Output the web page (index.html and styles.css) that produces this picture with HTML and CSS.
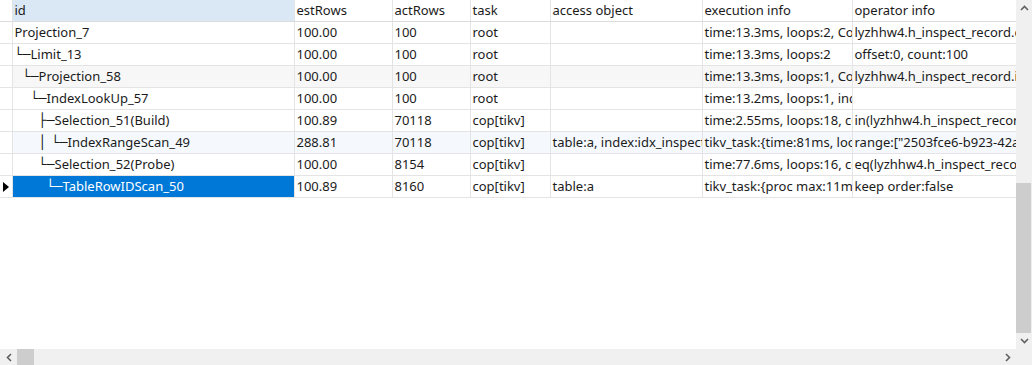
FILE: index.html
```html
<!DOCTYPE html>
<html lang="zh">
<head>
  <meta charset="UTF-8">
  <title>Explain Result</title>
  <link rel="stylesheet" href="styles.css">
</head>
<body>
  <div class="grid-view">
    <div class="grid-main">
      <div class="grid-body">
        <table class="result">
          <colgroup>
            <col class="c-ind"><col class="c-id"><col class="c-est"><col class="c-act">
            <col class="c-task"><col class="c-acc"><col class="c-exec"><col class="c-op">
          </colgroup>
          <thead>
            <tr>
              <th class="ind"></th>
              <th class="active-col">id</th>
              <th>estRows</th>
              <th>actRows</th>
              <th>task</th>
              <th>access object</th>
              <th>execution info</th>
              <th>operator info</th>
            </tr>
          </thead>
          <tbody>
            <tr>
              <td class="ind"></td>
              <td class="tree">Projection_7</td>
              <td>100.00</td><td>100</td><td>root</td><td></td>
              <td>time:13.3ms, loops:2, Concurrency:OFF</td>
              <td>lyzhhw4.h_inspect_record.create_time</td>
            </tr>
            <tr>
              <td class="ind"></td>
              <td class="tree"><span class="br">└─</span>Limit_13</td>
              <td>100.00</td><td>100</td><td>root</td><td></td>
              <td>time:13.3ms, loops:2</td>
              <td>offset:0, count:100</td>
            </tr>
            <tr class="row-gray">
              <td class="ind"></td>
              <td class="tree"><span class="ind-1"></span><span class="br">└─</span>Projection_58</td>
              <td>100.00</td><td>100</td><td>root</td><td></td>
              <td>time:13.3ms, loops:1, Concurrency:OFF</td>
              <td>lyzhhw4.h_inspect_record.inspect_id</td>
            </tr>
            <tr>
              <td class="ind"></td>
              <td class="tree"><span class="ind-2"></span><span class="br">└─</span>IndexLookUp_57</td>
              <td>100.00</td><td>100</td><td>root</td><td></td>
              <td>time:13.2ms, loops:1, index_task</td>
              <td></td>
            </tr>
            <tr>
              <td class="ind"></td>
              <td class="tree"><span class="ind-3"></span><span class="br">├─</span>Selection_51(Build)</td>
              <td>100.89</td><td>70118</td><td>cop[tikv]</td><td></td>
              <td>time:2.55ms, loops:18, cop_task</td>
              <td>in(lyzhhw4.h_inspect_record.status</td>
            </tr>
            <tr class="row-hover">
              <td class="ind"></td>
              <td class="tree"><span class="ind-3"></span><span class="br">│</span><span class="ind-half"></span><span class="br">└─</span>IndexRangeScan_49</td>
              <td>288.81</td><td>70118</td><td>cop[tikv]</td>
              <td>table:a, index:idx_inspectrecord</td>
              <td>tikv_task:{time:81ms, loops:76}</td>
              <td>range:["2503fce6-b923-42a1</td>
            </tr>
            <tr>
              <td class="ind"></td>
              <td class="tree"><span class="ind-3"></span><span class="br">└─</span>Selection_52(Probe)</td>
              <td>100.00</td><td>8154</td><td>cop[tikv]</td><td></td>
              <td>time:77.6ms, loops:16, cop_task</td>
              <td>eq(lyzhhw4.h_inspect_record.flag</td>
            </tr>
            <tr class="row-current">
              <td class="ind"><span class="pointer"></span></td>
              <td class="tree selected"><span class="ind-4"></span><span class="br">└─</span>TableRowIDScan_50</td>
              <td>100.89</td><td>8160</td><td>cop[tikv]</td>
              <td>table:a</td>
              <td>tikv_task:{proc max:11ms, p80</td>
              <td>keep order:false</td>
            </tr>
          </tbody>
        </table>
      </div>
      <div class="vscroll">
        <div class="sb-btn">
          <svg width="9" height="6" viewBox="0 0 9 6"><polyline points="1,5 4.5,1.5 8,5" /></svg>
        </div>
        <div class="vtrack"><div class="vthumb"></div></div>
        <div class="sb-btn">
          <svg width="9" height="6" viewBox="0 0 9 6"><polyline points="1,1 4.5,4.5 8,1" /></svg>
        </div>
      </div>
    </div>
    <div class="hscroll">
      <div class="sb-btn">
        <svg width="6" height="9" viewBox="0 0 6 9"><polyline points="5,1 1.5,4.5 5,8" /></svg>
      </div>
      <div class="hthumb"></div>
      <div class="htrack"></div>
      <div class="sb-btn">
        <svg width="6" height="9" viewBox="0 0 6 9"><polyline points="1,1 4.5,4.5 1,8" /></svg>
      </div>
      <div class="corner"></div>
    </div>
  </div>
</body>
</html>
```

FILE: styles.css
```css
html, body {
  margin: 0;
  padding: 0;
  background: #fff;
}
body {
  font-family: "Noto Sans", "DejaVu Sans", sans-serif;
  font-size: 13px;
  color: #1b1b1b;
}
.grid-view {
  width: 1032px;
  height: 365px;
  display: flex;
  flex-direction: column;
  overflow: hidden;
}
.grid-main {
  flex: 1;
  display: flex;
  min-height: 0;
}
.grid-body {
  width: 1016px;
  overflow: hidden;
}
.result {
  table-layout: fixed;
  border-collapse: collapse;
  width: 1016px;
}
.c-ind { width: 12px; }
.c-id { width: 282px; }
.c-est { width: 98px; }
.c-act { width: 78px; }
.c-task { width: 80px; }
.c-acc { width: 152px; }
.c-exec { width: 150px; }
.c-op { width: 164px; }
th, td {
  height: 21px;
  padding: 0 0 0 2px;
  border: 1px solid #e4e4e4;
  border-top: none;
  text-align: left;
  font-weight: normal;
  white-space: pre;
  overflow: hidden;
  line-height: 21px;
}
th {
  background: #fff;
  border-bottom-color: #dcdcdc;
}
th.ind, td.ind {
  padding: 0;
  border-left: none;
}
tr > :last-child {
  border-right: none;
}
th.active-col {
  background: #dae8f5;
}
/* ツリー罫線とインデント */
.br {
  font-family: "DejaVu Sans Mono", monospace;
  font-size: 13.3px;
}
.ind-half, .ind-1, .ind-2, .ind-3, .ind-4 {
  display: inline-block;
}
.ind-half { width: 5px; }
.ind-1 { width: 8px; }
.ind-2 { width: 16px; }
.ind-3 { width: 24px; }
.ind-4 { width: 32px; }
.row-gray td {
  background: #f7f7f7;
}
.row-hover td {
  background: #f5f9fe;
}
.row-gray td.ind, .row-hover td.ind {
  background: #fff;
}
td.selected {
  background: #0078d7;
  color: #fff;
}
.pointer {
  display: block;
  margin-left: 3px;
  width: 0;
  height: 0;
  border-top: 5px solid transparent;
  border-bottom: 5px solid transparent;
  border-left: 6px solid #000;
}
/* スクロールバー */
.vscroll {
  width: 16px;
  background: #f0f0f0;
  display: flex;
  flex-direction: column;
}
.sb-btn {
  width: 16px;
  height: 16px;
  display: flex;
  align-items: center;
  justify-content: center;
  flex: none;
}
.sb-btn svg polyline {
  fill: none;
  stroke: #606060;
  stroke-width: 1.6;
}
.vtrack {
  flex: 1;
  display: flex;
  flex-direction: column;
  justify-content: flex-end;
  padding-top: 1px;
}
.vthumb {
  height: 150px;
  margin: 0 1px 0 0;
  background: #cdcdcd;
}
.hscroll {
  height: 16px;
  display: flex;
  background: #f0f0f0;
}
.hscroll .sb-btn {
  width: 17px;
}
.hthumb {
  width: 17px;
  background: #cdcdcd;
}
.htrack {
  flex: 1;
}
.corner {
  width: 16px;
}
```
